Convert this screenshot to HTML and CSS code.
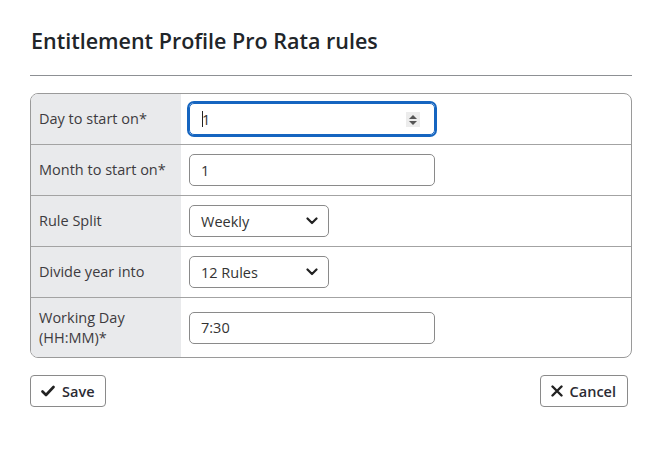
FILE: index.html
```html
<!DOCTYPE html>
<html>
<head>
<meta charset="utf-8">
<link rel="stylesheet" href="styles.css">
</head>
<body>
<div class="dialog">
  <h1 class="title">Entitlement Profile Pro Rata rules</h1>
  <hr class="sep">
  <div class="form-table">
    <div class="row">
      <div class="label">Day to start on*</div>
      <div class="cell">
        <div class="input focused">
          <span class="caret"></span><span>1</span>
          <span class="spin">
            <svg width="12" height="14" viewBox="0 0 12 14"><path d="M6 2 L10 6 H2 Z" fill="#555"/><path d="M6 12 L10 8 H2 Z" fill="#555"/></svg>
          </span>
        </div>
      </div>
    </div>
    <div class="row">
      <div class="label">Month to start on*</div>
      <div class="cell"><div class="input">1</div></div>
    </div>
    <div class="row">
      <div class="label">Rule Split</div>
      <div class="cell">
        <div class="select"><span>Weekly</span>
          <svg width="12" height="8" viewBox="0 0 12 8"><path d="M1.5 1.5 L6 6 L10.5 1.5" fill="none" stroke="#222" stroke-width="2.2" stroke-linecap="round" stroke-linejoin="round"/></svg>
        </div>
      </div>
    </div>
    <div class="row">
      <div class="label">Divide year into</div>
      <div class="cell">
        <div class="select"><span>12 Rules</span>
          <svg width="12" height="8" viewBox="0 0 12 8"><path d="M1.5 1.5 L6 6 L10.5 1.5" fill="none" stroke="#222" stroke-width="2.2" stroke-linecap="round" stroke-linejoin="round"/></svg>
        </div>
      </div>
    </div>
    <div class="row">
      <div class="label tall">Working Day (HH:MM)*</div>
      <div class="cell"><div class="input">7:30</div></div>
    </div>
  </div>
  <div class="actions">
    <button class="btn">
      <svg width="14" height="12" viewBox="0 0 14 12"><path d="M1.5 6.5 L5 10 L12.5 2" fill="none" stroke="#222" stroke-width="2.6" stroke-linecap="round" stroke-linejoin="round"/></svg>
      Save
    </button>
    <button class="btn">
      <svg width="12" height="12" viewBox="0 0 12 12"><path d="M1.5 1.5 L10.5 10.5 M10.5 1.5 L1.5 10.5" fill="none" stroke="#222" stroke-width="2.4" stroke-linecap="round"/></svg>
      Cancel
    </button>
  </div>
</div>
</body>
</html>
```
FILE: styles.css
```css
* { box-sizing: border-box; }
html, body { margin: 0; padding: 0; background: #fff; }
body { font-family: "Open Sans", "Noto Sans", sans-serif; color: #333; font-size: 14.5px; }

.dialog { padding: 27px 29px 0 30px; }

.title {
  margin: 0 0 0 1px;
  font-size: 21.5px;
  line-height: 28px;
  font-weight: 600;
  color: #212529;
}

.sep {
  margin: 20px 0 17px 0;
  border: 0;
  border-top: 1px solid #8d9094;
  height: 0;
}

.form-table {
  border: 1px solid #9a9a9a;
  border-radius: 8px;
  overflow: hidden;
}

.row {
  display: grid;
  grid-template-columns: 150px 1fr;
  border-top: 1px solid #a3a3a3;
}
.row:first-child { border-top: 0; }

.label {
  background: #e9eaec;
  padding: 9px 8px;
  line-height: 20px;
  display: flex;
  align-items: center;
  color: #3d3b40;
}
.label.tall { padding: 10px 8px 9px 8px; }

.cell {
  padding: 9px 8px;
  display: flex;
  align-items: center;
}

.input {
  position: relative;
  width: 246px;
  height: 32px;
  border: 1px solid #8a8a8a;
  border-radius: 5px;
  padding: 0 11px;
  display: flex;
  align-items: center;
  color: #333;
}
.input.focused {
  border: 1px solid #1565c0;
  box-shadow: 0 0 0 2px #1565c0;
  border-radius: 5px;
  padding-left: 12px;
}
.caret {
  display: inline-block;
  width: 1px;
  height: 16px;
  background: #222;
  margin-right: -1px;
}
.spin {
  position: absolute;
  right: 14px;
  top: 8px;
  width: 14px;
  height: 15px;
  background: #ececec;
  display: flex;
  align-items: center;
  justify-content: center;
}

.select {
  width: 140px;
  height: 32px;
  border: 1px solid #8a8a8a;
  border-radius: 5px;
  padding: 0 10px 0 11px;
  display: flex;
  align-items: center;
  justify-content: space-between;
  color: #333;
}

.actions {
  margin-top: 17px;
  display: flex;
  justify-content: space-between;
  padding-right: 4px;
}

.btn {
  height: 32px;
  border: 1px solid #8a8a8a;
  border-radius: 4px;
  background: #fff;
  font-family: "Open Sans", "Noto Sans", sans-serif;
  font-size: 14.5px;
  font-weight: 600;
  color: #2b2b33;
  padding: 0 11px 0 10px;
  display: flex;
  align-items: center;
  gap: 7px;
}
```
